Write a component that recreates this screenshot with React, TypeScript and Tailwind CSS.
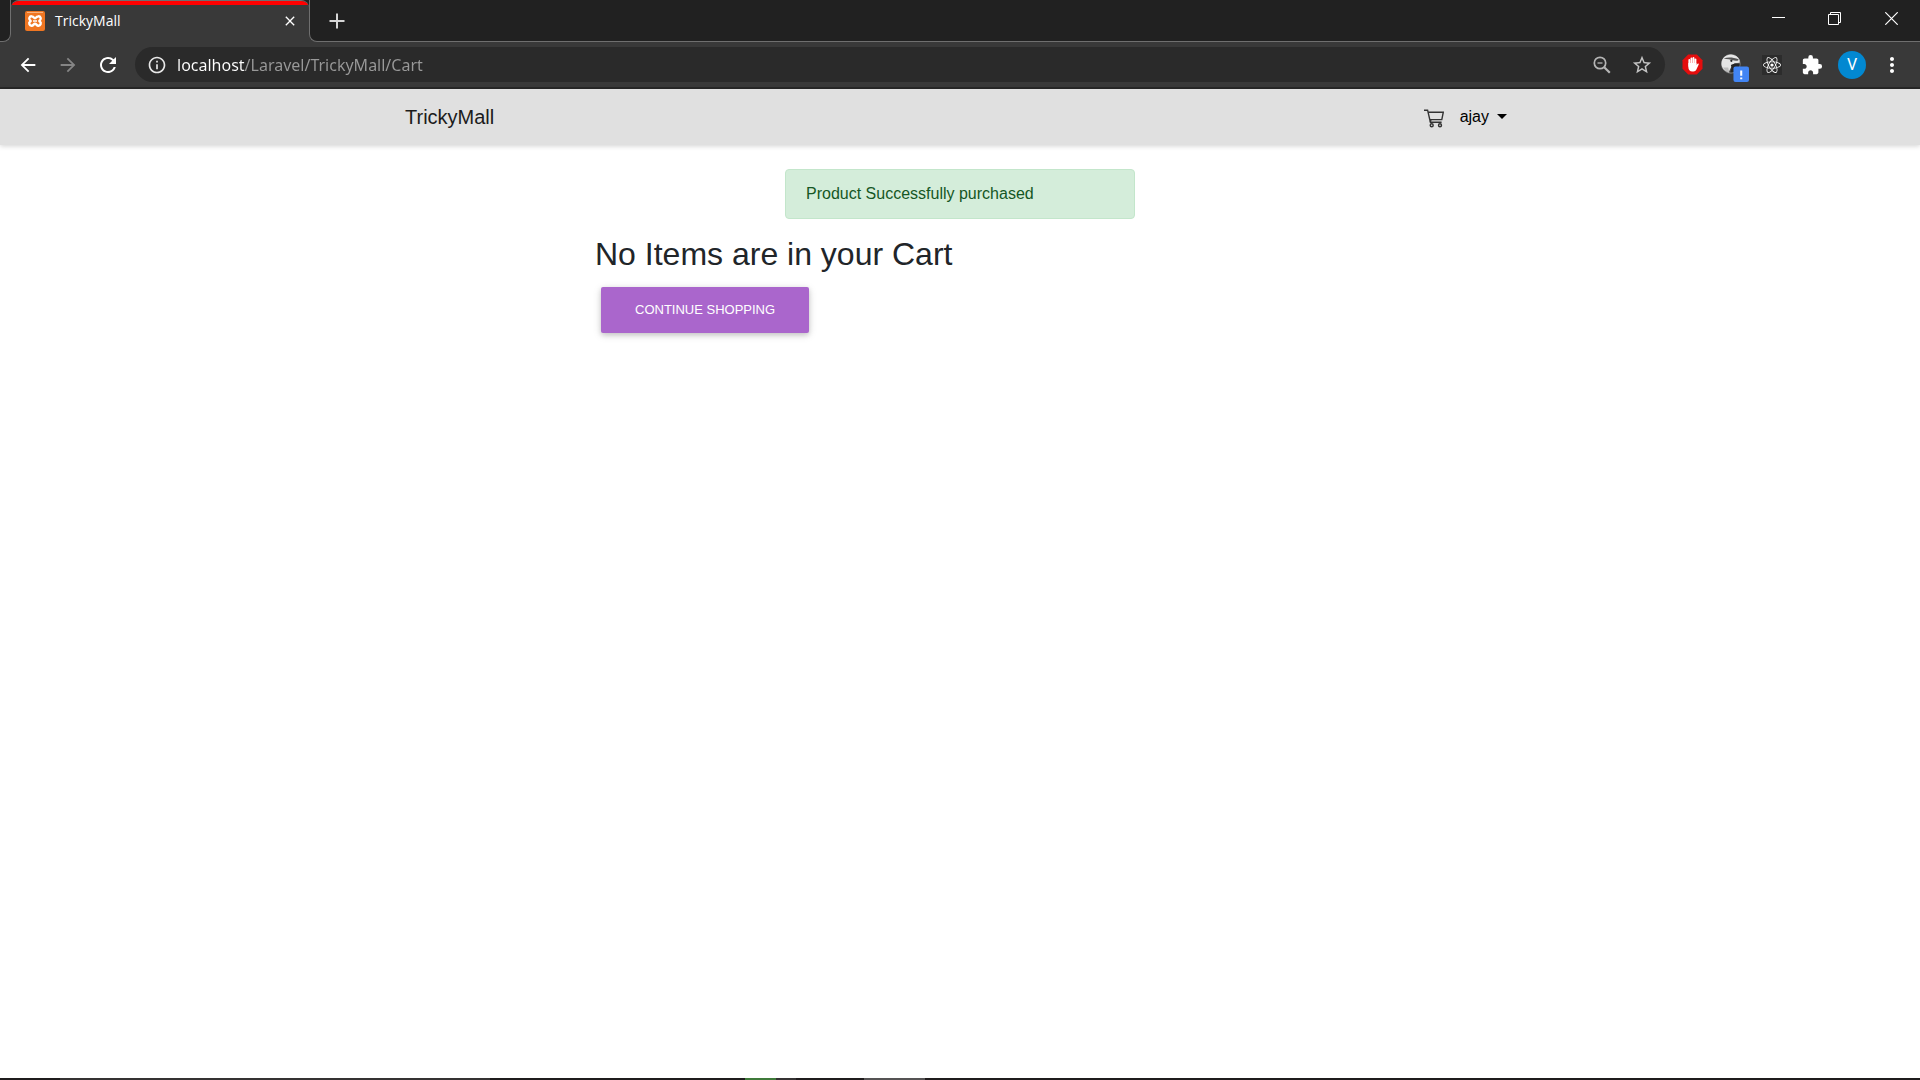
import type { ReactNode } from "react";
import {
  MdArrowBack,
  MdArrowForward,
  MdClose,
  MdExtension,
  MdInfoOutline,
  MdMoreVert,
  MdRefresh,
  MdStarBorder,
} from "react-icons/md";
import { FaReact } from "react-icons/fa";

function IconButton({ label, className = "", children }: { label: string; className?: string; children: ReactNode }) {
  return (
    <button type="button" aria-label={label} className={`flex size-10 shrink-0 items-center justify-center ${className}`}>
      {children}
    </button>
  );
}

function XamppIcon() {
  return (
    <svg viewBox="0 0 20 20" className="size-5 shrink-0" aria-hidden="true">
      <rect width="20" height="20" rx="2" fill="#ef7622" />
      <path d="M2 1.5h16" stroke="#f9b27c" strokeWidth="1" />
      <path
        d="M6.700 5.200c1.700 0 2 2 3.300 2s1.600-2 3.300-2a2.300 2.300 0 0 1 1.700 4c-.9.500-.9 1 0 1.500a2.300 2.300 0 0 1-1.700 4c-1.700 0-2-2-3.300-2s-1.600 2-3.300 2a2.300 2.300 0 0 1-1.700-4c.9-.5.9-1 0-1.500a2.300 2.300 0 0 1 1.700-4z"
        fill="none"
        stroke="#fff"
        strokeWidth="2.4"
      />
      <path d="M8 10h4" stroke="#fff" strokeWidth="1.4" />
    </svg>
  );
}

function ZoomOutIcon() {
  return (
    <svg viewBox="0 0 18 18" className="size-[18px]" fill="none" stroke="currentColor" aria-hidden="true">
      <circle cx="7" cy="7" r="5.7" strokeWidth="1.7" />
      <path d="M4.500 7h5" strokeWidth="1.3" />
      <path d="M11.200 11.200l5.600 5.600" strokeWidth="2.2" />
    </svg>
  );
}

function AdBlockIcon() {
  return (
    <svg viewBox="0 0 21 21" className="size-[21px]" aria-hidden="true">
      <path d="M6.2.5h8.600l5.700 5.700v8.600l-5.700 5.700H6.200L.5 14.800V6.200z" fill="#e40d0d" />
      <g stroke="#fff" strokeWidth="1.8" strokeLinecap="round">
        <path d="M7.300 6v6M9.400 4.300V11M11.500 3.900V11M13.500 5.300V12" />
      </g>
      <path d="M6.400 9h8v2l1.200-1.300c.6-.5 1.400 0 1.100.8l-2.300 5c-.6 1.300-1.500 2-3 2h-1c-2.600 0-4-1.800-4-4z" fill="#fff" />
    </svg>
  );
}

function BirdIcon() {
  return (
    <svg viewBox="0 0 27 27" className="size-7" aria-hidden="true">
      <circle cx="9.5" cy="9.5" r="9" fill="#4b4b4b" stroke="#8a8a8a" strokeWidth=".8" />
      <path d="M.5 9C.8 4 4.500.4 9.500.4c4 0 7 2 8.400 5.300L18 8.500l-5 .5c-2 1.500-3.500 4-5.500 8.500C3.500 17 .3 13.500.5 9z" fill="#e6e6e6" />
      <path d="M2.500 4.300c4-1.500 9-1.300 14.500.7l-.5 1.200c-2 .6-4 .2-5.600-.4C9.500 5.200 6 5 2.500 4.300z" fill="#555" />
      <circle cx="10" cy="6.600" r="1.100" fill="#222" />
      <path d="M9.500 10.500c2.500-1.300 5.500-1.500 8.500-.5-.2 3-1 5-3 6.700-1 .7-4 1-6 .6 1-2.300 1.500-4.500.5-6.800z" fill="#262626" />
      <path d="M2 13c1.500 2.500 3 4 6 5.300L7 13z" fill="#bdbdbd" />
      <rect x="12" y="12" width="15" height="15" rx="2" fill="#4285f4" />
      <path d="M19.500 16v5M19.500 22.600v1.800" stroke="#fff" strokeWidth="2" />
    </svg>
  );
}

function TabStrip() {
  return (
    <header className="flex h-[42px] items-start bg-[#393939]">
      <div className="h-[42px] w-[11px] rounded-br-lg border-r border-b border-[#6f6f6f] bg-[#212121]" />
      <div className="h-[42px] w-[298px] bg-[#212121]">
        <div className="h-full overflow-hidden rounded-t-lg border-t border-[#6f6f6f] bg-[#393939]">
          <div className="flex h-full items-center gap-2.5 border-t-4 border-[#ff0000] pr-[11px] pb-1.5 pl-3.5">
            <XamppIcon />
            <span className="flex-1 font-['Open_Sans',sans-serif] text-sm text-white">TrickyMall</span>
            <button type="button" aria-label="Close tab" className="text-white">
              <MdClose className="size-4" />
            </button>
          </div>
        </div>
      </div>
      <div className="flex h-[42px] flex-1 items-start justify-between rounded-bl-lg border-b border-l border-[#6f6f6f] bg-[#212121]">
        <IconButton label="New tab" className="ml-[7px] text-[#d6d6d6]">
          <svg viewBox="0 0 16 16" className="mt-0.5 size-4" aria-hidden="true">
            <path d="M8 .5v15M.5 8h15" stroke="currentColor" strokeWidth="2" />
          </svg>
        </IconButton>
        <div className="flex h-9 text-white">
          <button type="button" aria-label="Minimize" className="flex w-14 items-center justify-center">
            <svg viewBox="0 0 13 13" className="size-[13px]" aria-hidden="true">
              <path d="M0 5.500h13" stroke="currentColor" />
            </svg>
          </button>
          <button type="button" aria-label="Restore" className="flex w-14 items-center justify-center">
            <svg viewBox="0 0 13 13" className="size-[13px]" fill="none" stroke="currentColor" aria-hidden="true">
              <path d="M.5 2.500h10v10H.5zM2.500 2.500v-2h10v10h-2" />
            </svg>
          </button>
          <button type="button" aria-label="Close" className="flex w-[58px] items-center justify-center">
            <svg viewBox="0 0 13 13" className="size-[13px]" stroke="currentColor" strokeWidth="1.2" aria-hidden="true">
              <path d="M.3.3l12.400 12.400M12.700.3L.3 12.700" />
            </svg>
          </button>
        </div>
      </div>
    </header>
  );
}

function Toolbar() {
  return (
    <div className="flex h-[47px] items-center border-b-2 border-[#282828] bg-[#393939] pl-2 text-white">
      <IconButton label="Back">
        <MdArrowBack className="size-[22px]" />
      </IconButton>
      <IconButton label="Forward" className="text-[#858585]">
        <MdArrowForward className="size-[22px]" />
      </IconButton>
      <IconButton label="Reload">
        <MdRefresh className="size-6" />
      </IconButton>
      <div className="ml-[7px] flex h-[35px] flex-1 items-center rounded-full bg-[#2a2a2a] pr-[3px] pl-3">
        <MdInfoOutline className="size-5 shrink-0 text-[#e8e8e8]" />
        <input
          type="text"
          aria-label="Address"
          defaultValue="localhost/Laravel/TrickyMall/Cart"
          className="ml-2.5 min-w-0 flex-1 bg-[linear-gradient(to_right,#fff_68px,#999_68px)] bg-clip-text font-['Noto_Sans',sans-serif] text-base text-transparent outline-none"
        />
        <IconButton label="Zoom" className="text-[#b5b5b5]">
          <ZoomOutIcon />
        </IconButton>
        <IconButton label="Bookmark this page" className="text-[#c4c4c4]">
          <MdStarBorder className="size-[22px]" />
        </IconButton>
      </div>
      <div className="flex items-center pr-2 pl-[7px]">
        <IconButton label="Ad blocker">
          <AdBlockIcon />
        </IconButton>
        <IconButton label="Bird extension" className="pt-1.5 pl-1.5">
          <BirdIcon />
        </IconButton>
        <IconButton label="React Developer Tools">
          <span className="flex size-5 items-center justify-center bg-[#2c2c2c]">
            <FaReact className="size-[18px]" />
          </span>
        </IconButton>
        <IconButton label="Extensions">
          <MdExtension className="size-[22px]" />
        </IconButton>
        <IconButton label="Profile">
          <span className="flex size-7 items-center justify-center rounded-full bg-[#0288d1] font-[Roboto,sans-serif] text-base">
            V
          </span>
        </IconButton>
        <IconButton label="Menu">
          <MdMoreVert className="size-6" />
        </IconButton>
      </div>
    </div>
  );
}

function CartIcon() {
  return (
    <svg viewBox="0 0 20 19" className="h-[19px] w-5" fill="none" stroke="#333" strokeWidth="1.4" aria-hidden="true">
      <path d="M0 1.200h3.600l2.800 12h11.200M4 3.200h15.300l-1.500 7.400H5.800" />
      <path d="M6.400 13.200l.5-2.500" />
      <circle cx="7.700" cy="16.300" r="1.500" />
      <circle cx="16" cy="16.300" r="1.500" />
    </svg>
  );
}

function Navbar() {
  return (
    <nav className="relative bg-[#e0e0e0] shadow-[0_1px_5px_rgba(0,0,0,0.18)]">
      <div className="mx-auto flex h-14 max-w-[1140px] items-center justify-between px-[15px]">
        <a href="#home" className="text-xl text-[#1c1c1c]">
          TrickyMall
        </a>
        <div className="flex items-center gap-4 pr-2 text-black">
          <a href="#cart" aria-label="Cart" className="pt-0.5">
            <CartIcon />
          </a>
          <button type="button" aria-haspopup="menu" className="flex items-center gap-2">
            ajay
            <svg viewBox="0 0 10 5" className="mb-0.5 h-[5px] w-2.5" aria-hidden="true">
              <path d="M0 0h10L5 5z" fill="currentColor" />
            </svg>
          </button>
        </div>
      </div>
    </nav>
  );
}

function TaskbarEdge() {
  return (
    <div className="flex h-0.5 bg-[#1f1c1d]">
      <div className="ml-[60px] w-[430px] bg-[#353333]" />
      <div className="ml-[255px] w-[31px] bg-[#3f7a3a]" />
      <div className="w-5 bg-[#353333]" />
      <div className="ml-[68px] w-[61px] bg-[#555354]" />
    </div>
  );
}

export default function App() {
  return (
    <div className="flex min-h-screen flex-col bg-white font-['Liberation_Sans',Arial,sans-serif]">
      <TabStrip />
      <Toolbar />
      <Navbar />
      <main className="mx-auto w-full max-w-[1140px] flex-1 pt-6">
        <div
          role="alert"
          className="mx-auto w-[350px] rounded border border-[#c3e6cb] bg-[#d4edda] px-5 py-3 text-base text-[#155724]"
        >
          Product Successfully purchased
        </div>
        <section className="mx-auto mt-4 w-2/3 px-[15px]">
          <h2 className="text-[32px] leading-[38px] text-[#212529]">No Items are in your Cart</h2>
          <a
            href="#shop"
            className="m-1.5 mt-3.5 inline-block rounded-xs bg-[#aa66cc] px-[34px] py-[13px] text-[13px] leading-5 text-white uppercase shadow-[0_2px_5px_rgba(0,0,0,0.16),0_2px_10px_rgba(0,0,0,0.12)]"
          >
            Continue Shopping
          </a>
        </section>
      </main>
      <TaskbarEdge />
    </div>
  );
}
